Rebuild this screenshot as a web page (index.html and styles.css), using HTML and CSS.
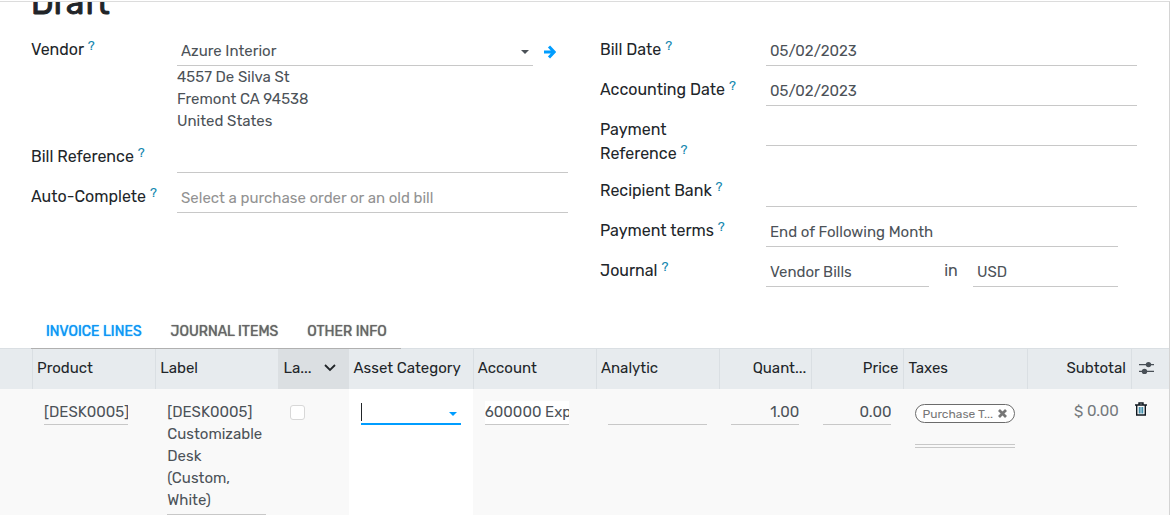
FILE: index.html
```html
<!DOCTYPE html>
<html lang="en">
<head>
    <meta charset="UTF-8">
    <meta name="viewport" content="width=device-width, initial-scale=1.0">
    <title>Vendor Bill</title>
    <link rel="stylesheet" href="styles.css">
</head>
<body>
    <main class="sheet">
        <div class="title">
            <h1>Draft</h1>
        </div>

        <form class="groups">
            <div class="group group-left">
                <div class="row">
                    <label for="vendor">Vendor <sup>?</sup></label>
                    <div class="field">
                        <div class="many2one">
                            <div class="dropdown">
                                <input type="text" id="vendor" value="Azure Interior">
                                <span class="caret"></span>
                            </div>
                            <button type="button" class="external" aria-label="Open vendor">
                                <svg width="12" height="14" viewBox="0 0 12 14" fill="none" stroke="currentColor" stroke-width="3"><path d="M0 7h10M5 1.5L10.2 7L5 12.5"/></svg>
                            </button>
                        </div>
                        <address>4557 De Silva St<br>Fremont CA 94538<br>United States</address>
                    </div>
                </div>
                <div class="row">
                    <label for="billRef">Bill Reference <sup>?</sup></label>
                    <div class="field"><input type="text" id="billRef"></div>
                </div>
                <div class="row">
                    <label for="autoComplete">Auto-Complete <sup>?</sup></label>
                    <div class="field"><input type="text" id="autoComplete" placeholder="Select a purchase order or an old bill"></div>
                </div>
            </div>

            <div class="group group-right">
                <div class="row">
                    <label for="billDate">Bill Date <sup>?</sup></label>
                    <div class="field"><input type="text" id="billDate" value="05/02/2023"></div>
                </div>
                <div class="row">
                    <label for="accountingDate">Accounting Date <sup>?</sup></label>
                    <div class="field"><input type="text" id="accountingDate" value="05/02/2023"></div>
                </div>
                <div class="row">
                    <label for="paymentRef">Payment<br>Reference <sup>?</sup></label>
                    <div class="field"><input type="text" id="paymentRef"></div>
                </div>
                <div class="row">
                    <label for="bank">Recipient Bank <sup>?</sup></label>
                    <div class="field"><input type="text" id="bank"></div>
                </div>
                <div class="row">
                    <label for="terms">Payment terms <sup>?</sup></label>
                    <div class="field field-short"><input type="text" id="terms" value="End of Following Month"></div>
                </div>
                <div class="row">
                    <label for="journal">Journal <sup>?</sup></label>
                    <div class="field field-short journal">
                        <input type="text" id="journal" value="Vendor Bills">
                        <label class="in" for="currency">in</label>
                        <input type="text" id="currency" value="USD">
                    </div>
                </div>
            </div>
        </form>

        <nav class="tabs">
            <a href="#lines" class="active">Invoice Lines</a>
            <a href="#journal-items">Journal Items</a>
            <a href="#other">Other Info</a>
        </nav>

        <table class="lines" id="lines">
            <colgroup>
                <col class="col-handle">
                <col class="col-text">
                <col class="col-text">
                <col class="col-check">
                <col class="col-category">
                <col class="col-text">
                <col class="col-text">
                <col class="col-number">
                <col class="col-number">
                <col class="col-text">
                <col class="col-total">
                <col class="col-action">
            </colgroup>
            <thead>
                <tr>
                    <th></th>
                    <th>Product</th>
                    <th>Label</th>
                    <th class="sorted">
                        <div class="sort">
                            <span>La...</span>
                            <svg width="12" height="8" viewBox="0 0 12 8" fill="none" stroke="currentColor" stroke-width="1.8"><path d="M1 1l5 5l5-5"/></svg>
                        </div>
                    </th>
                    <th class="plain">Asset Category</th>
                    <th>Account</th>
                    <th>Analytic</th>
                    <th class="number">Quant...</th>
                    <th class="number">Price</th>
                    <th>Taxes</th>
                    <th class="number">Subtotal</th>
                    <th>
                        <button type="button" class="options" aria-label="Optional columns">
                            <svg width="15" height="14" viewBox="0 0 15 14" fill="currentColor"><path d="M0 3h15v1.2H0zM0 9.8h15V11H0z"/><circle cx="9.5" cy="3.6" r="2.7"/><circle cx="5.5" cy="10.4" r="2.7"/></svg>
                        </button>
                    </th>
                </tr>
            </thead>
            <tbody>
                <tr>
                    <td></td>
                    <td class="narrow"><input type="text" aria-label="Product" value="[DESK0005]"></td>
                    <td><textarea aria-label="Label" rows="5">[DESK0005]
Customizable
Desk
(Custom,
White)</textarea></td>
                    <td><input type="checkbox" aria-label="Landed costs"></td>
                    <td class="editing">
                        <div class="dropdown">
                            <input type="text" aria-label="Asset Category">
                            <span class="caret"></span>
                        </div>
                    </td>
                    <td class="narrow account"><input type="text" aria-label="Account" value="600000 Expenses"></td>
                    <td><input type="text" aria-label="Analytic"></td>
                    <td class="number"><input type="text" aria-label="Quantity" value="1.00"></td>
                    <td class="number"><input type="text" aria-label="Price" value="0.00"></td>
                    <td>
                        <div class="tags">
                            <span class="tag">
                                <span class="tag-name">Purchase T...</span>
                                <button type="button" aria-label="Remove tax">
                                    <svg width="9" height="9" viewBox="0 0 9 9" stroke="currentColor" stroke-width="2.8"><path d="M1 1l7 7M8 1l-7 7"/></svg>
                                </button>
                            </span>
                            <input type="text" aria-label="Taxes">
                        </div>
                    </td>
                    <td class="number total">$ 0.00</td>
                    <td class="action">
                        <button type="button" aria-label="Delete line">
                            <svg width="12" height="14" viewBox="0 0 12 14" fill="none" stroke="#111820" stroke-width="1.4"><path d="M0 3h12M4 3V1h4v2M1.7 3v10h8.6V3"/><path d="M4.3 5v6.5M6 5v6.5M7.7 5v6.5" stroke="#17779b" stroke-width="1"/></svg>
                        </button>
                    </td>
                </tr>
            </tbody>
        </table>
    </main>
</body>
</html>
```
FILE: styles.css
```css
* {
    margin: 0;
    padding: 0;
    box-sizing: border-box;
}

body {
    background-color: #fff;
    color: #4c5258;
    font-family: Rubik, Roboto, sans-serif;
    font-size: 15px;
    line-height: 22px;
    padding-top: 1px;
    height: 100vh;
    overflow: hidden;
}

input,
textarea,
button {
    font: inherit;
    color: inherit;
    background: none;
    border: none;
    border-radius: 0;
    outline: none;
}

button {
    cursor: pointer;
}

svg {
    display: block;
}

.sheet {
    min-height: 100vh;
    border-top: 1px solid #dcdcdc;
    border-right: 1px solid #d4d4d4;
}

.title {
    display: flex;
    align-items: flex-end;
    height: 21px;
    padding: 0 31px;
    margin-bottom: 14px;
    overflow: hidden;
}

.title h1 {
    color: #212529;
    font-size: 33px;
    line-height: 40px;
    font-weight: 400;
    -webkit-text-stroke: 1px #212529;
}

/* Form */
.groups {
    display: grid;
    grid-template-columns: 1fr 1fr;
    gap: 32px;
    padding: 0 32px 0 31px;
}

.row {
    display: grid;
    min-height: 40px;
    padding-bottom: 11px;
}

.group-left .row {
    grid-template-columns: 146px 1fr;
}

.group-right .row {
    grid-template-columns: 166px 1fr;
}

.row label {
    padding: 1px 0;
    color: #212529;
    font-size: 16px;
    line-height: 24px;
}

.row sup {
    color: #1688b0;
    font-size: 13px;
    line-height: 12px;
    vertical-align: 5px;
}

.field input {
    display: block;
    width: 100%;
    height: 29px;
    padding: 0 4px;
    border-bottom: 1px solid #c8c8c8;
}

.field input::placeholder {
    color: #929292;
    opacity: 1;
}

.field-short {
    padding-right: 19px;
}

.many2one {
    display: flex;
    align-items: center;
}

.dropdown {
    position: relative;
    flex: 1;
}

.caret {
    position: absolute;
    right: 4px;
    top: 45%;
    border: 4px solid transparent;
    border-top-color: currentColor;
    border-bottom: none;
}

.external {
    width: 35px;
    padding-left: 11px;
    color: #009dff;
}

.field address {
    font-style: normal;
    margin-bottom: 1px;
}

.journal {
    display: grid;
    grid-template-columns: 163fr 44px 145fr;
}

.journal .in {
    color: #4c5258;
    text-align: center;
}

/* Tabs */
.tabs {
    display: flex;
    width: fit-content;
    margin: 17px 0 -1px 31px;
    border-bottom: 1px solid #b0b0b0;
    position: relative;
}

.tabs a {
    padding: 0 14px 0 15px;
    color: #666;
    font-size: 14px;
    font-weight: 400;
    line-height: 33px;
    text-transform: uppercase;
    text-decoration: none;
    text-shadow: 0 0 1px currentColor;
}

.tabs a.active {
    color: #0d97f5;
}

/* Invoice lines */
.lines {
    width: 100%;
    table-layout: fixed;
    border-collapse: separate;
    border-spacing: 0;
}

.col-handle { width: 32px; }
.col-text { width: 123px; }
.col-check { width: 70px; }
.col-category { width: 124px; }
.col-number { width: 92px; }
.col-total { width: 104px; }
.col-action { width: 38px; }

.lines th {
    height: 41px;
    padding: 0 5px 2px 4px;
    background-color: #e7ebee;
    border-top: 1px solid #dadfe3;
    border-left: 1px solid #dadfe3;
    color: #212529;
    font-weight: 400;
    text-align: left;
    white-space: nowrap;
}

.lines th:first-child {
    border-left: none;
}

.lines th.plain {
    border-left-color: #e7ebee;
}

.lines th.sorted {
    background-color: #dbdfe2;
    border-left-color: #dbdfe2;
}

.sort {
    display: flex;
    align-items: center;
    justify-content: space-between;
    padding-right: 8px;
}

.lines th.number {
    text-align: right;
}

.options {
    display: block;
    margin-left: 3px;
    color: #495057;
}

.lines td {
    padding: 12px 12px 8px;
    background-color: #f9f9f9;
    vertical-align: top;
}

.lines td input[type="text"],
.lines textarea {
    display: block;
    width: 100%;
    border-bottom: 1px solid #c8c8c8;
}

.lines td input[type="text"] {
    height: 24px;
    padding-bottom: 2px;
}

.lines textarea {
    padding-bottom: 3px;
    resize: none;
    overflow: hidden;
}

.lines input[type="checkbox"] {
    appearance: none;
    display: block;
    width: 15px;
    height: 15px;
    margin-top: 4px;
    background-color: #fff;
    border: 1px solid #d8d8d8;
    border-radius: 3px;
}

.lines td.narrow {
    padding-right: 27px;
}

.lines td.account input {
    background-color: #fff;
}

.lines td.editing {
    background-color: #fff;
    color: #009dff;
}

/* text cursor at the start of the empty field */
.lines td.editing input {
    border-bottom: 2px solid #009dff;
    background: linear-gradient(#212529, #212529) left 2px / 1px 18px no-repeat;
}

.lines td.number input {
    text-align: right;
}

.lines td.total {
    color: #75797d;
    text-align: right;
}

.tags {
    padding-top: 3px;
    border-bottom: 1px solid #c8c8c8;
}

.tag {
    display: flex;
    align-items: center;
    justify-content: space-between;
    height: 19px;
    padding: 0 7px 0 6px;
    background-color: #fff;
    border: 1px solid #6c6c6c;
    border-radius: 10px;
    color: #777;
    font-size: 12px;
    line-height: 16px;
}

.lines .tags input[type="text"] {
    height: 22px;
    margin-bottom: 2px;
}

.lines td.total,
.lines td.action {
    padding-top: 11px;
}

.lines td.action {
    padding-left: 4px;
    padding-right: 4px;
}
```
